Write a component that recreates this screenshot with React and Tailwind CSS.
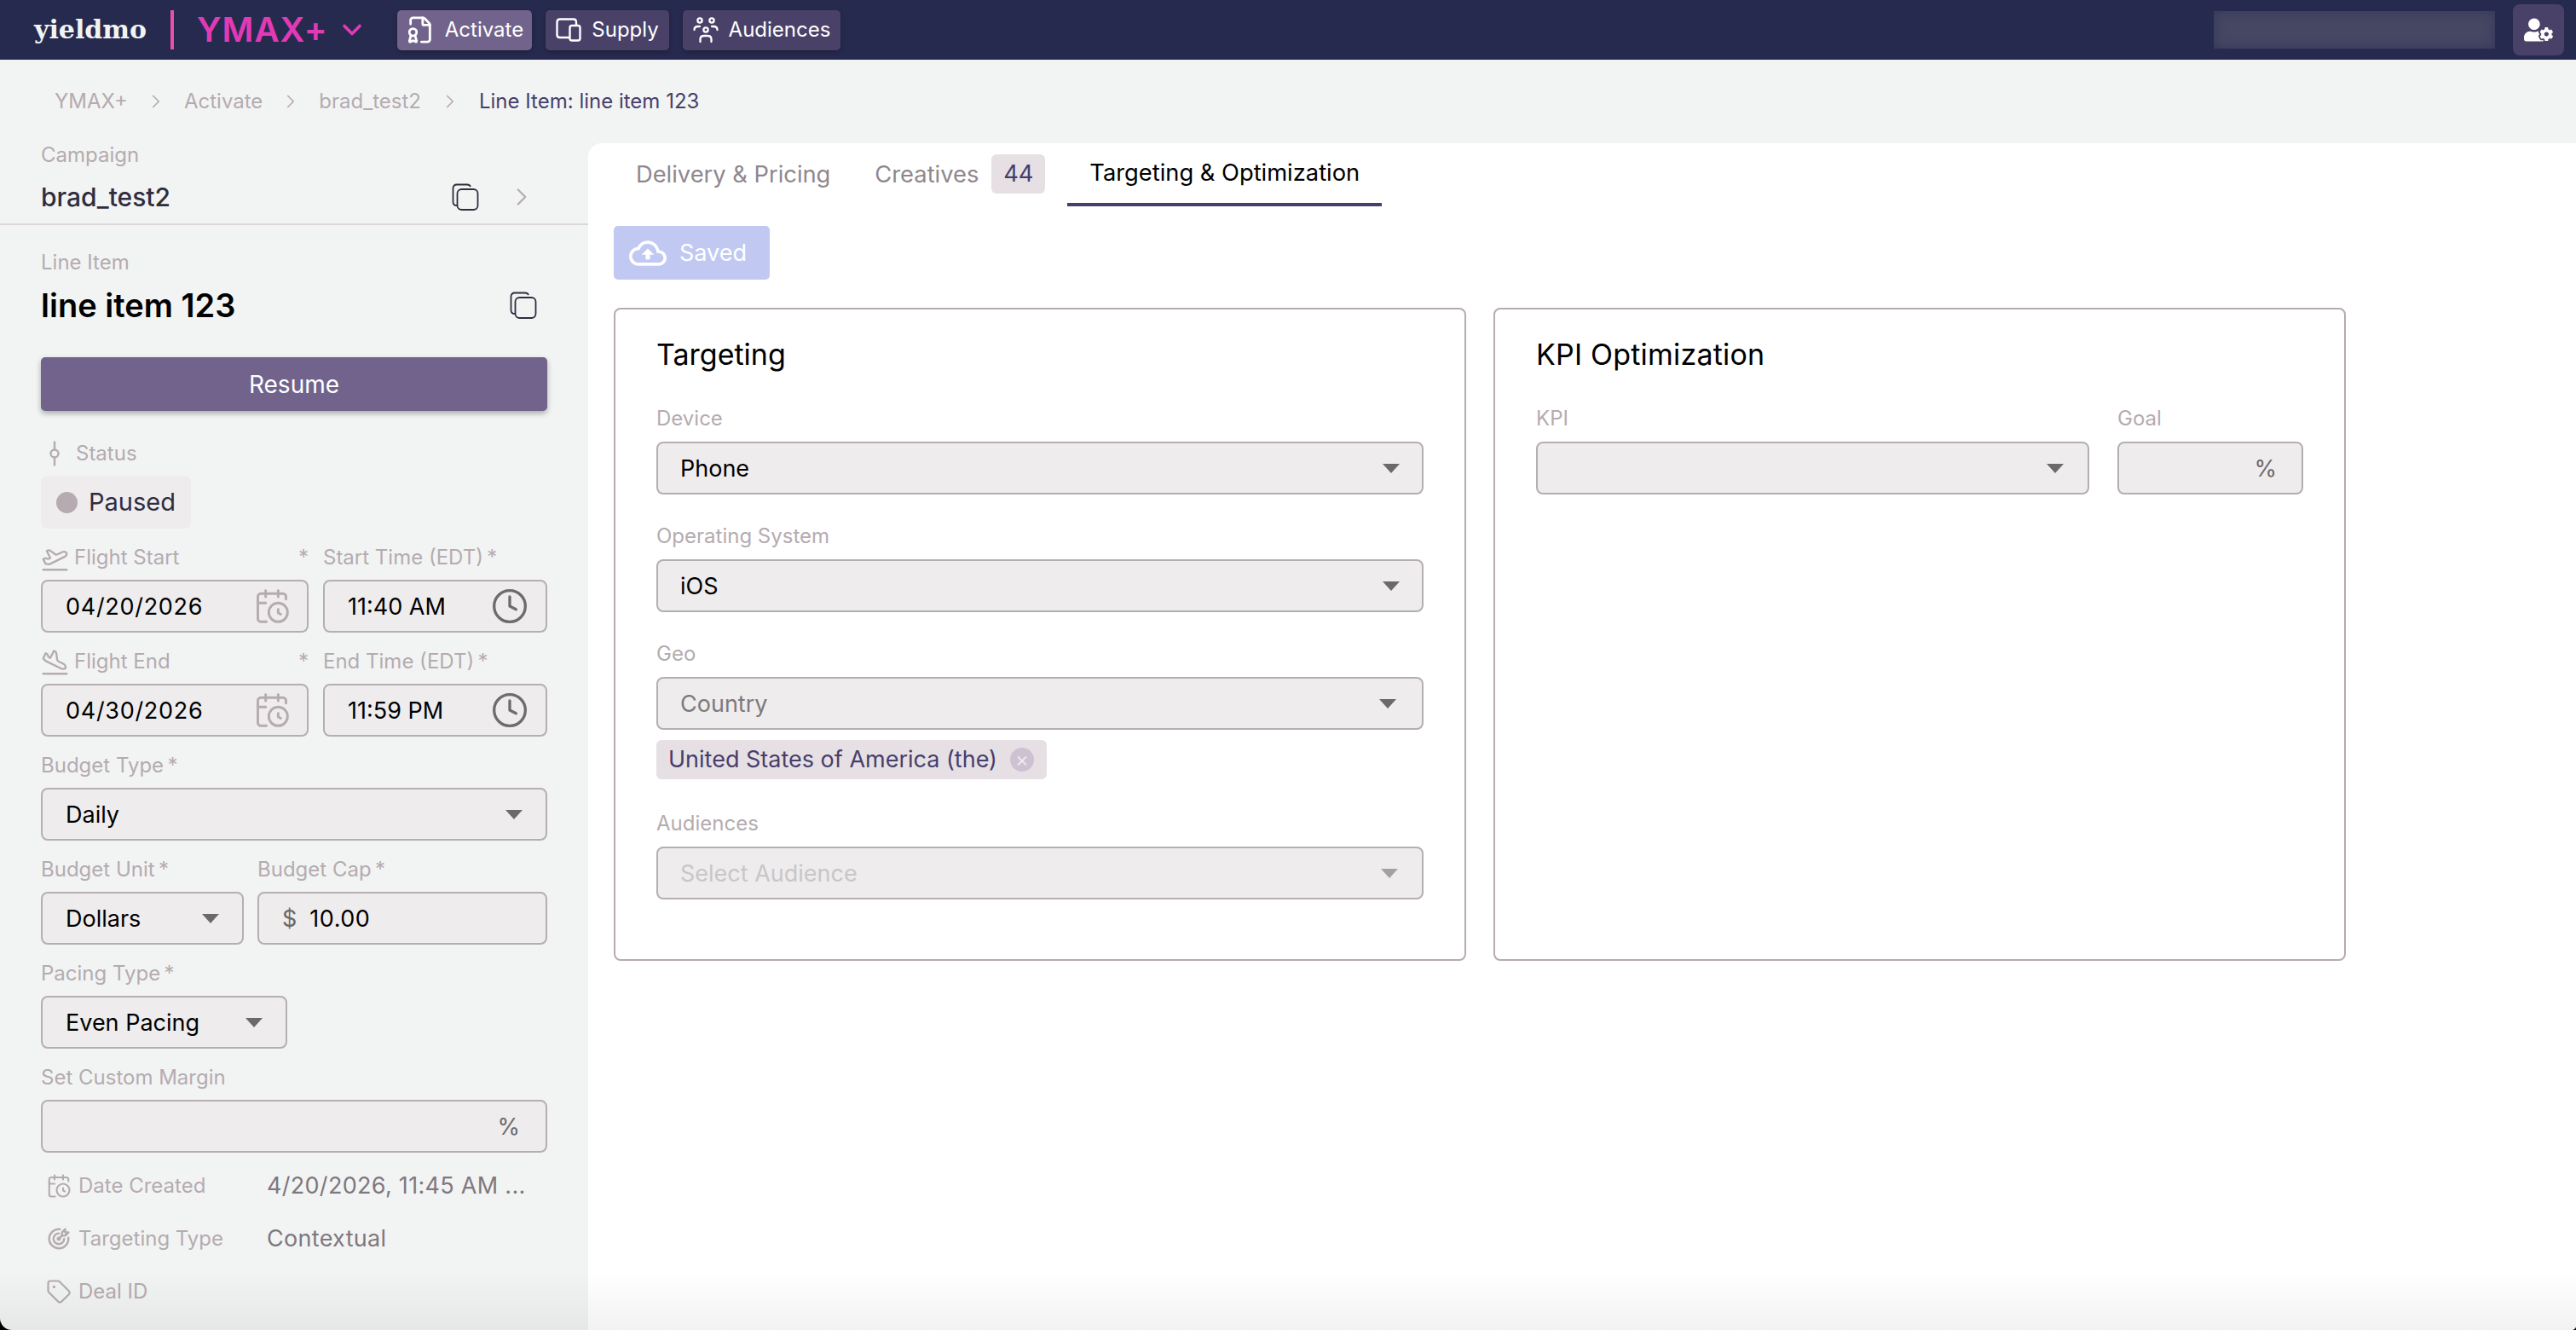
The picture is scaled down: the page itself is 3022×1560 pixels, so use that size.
import React from "react";
import { CalendarClock, Clock, ChevronRight, ChevronDown, PlaneTakeoff, PlaneLanding, GitCommitVertical, Tag, FileBadge } from "lucide-react";
import { FaUserCog } from "react-icons/fa";
import { MdOutlineCloudUpload } from "react-icons/md";
import { TbTargetArrow } from "react-icons/tb";

function CopyIcon({ className }) {
    return (
        <svg viewBox="0 0 32 32" fill="none" stroke="currentColor" strokeWidth="1.8" className={className}>
            <path d="M6 26 Q1.5 26 1.5 22 V6 Q1.5 1.5 6 1.5 H18 Q21 1.5 22 4" />
            <rect x="6.5" y="7" width="24" height="24" rx="5" />
        </svg>
    );
}

function SupplyIcon() {
    return (
        <svg viewBox="0 0 30 28" fill="none" stroke="currentColor" strokeWidth="2.4" strokeLinejoin="round" className="w-[30px] h-[28px]">
            <path d="M17 23 H5 Q1.5 23 1.5 20 V5 Q1.5 1.5 5 1.5 H21 Q24 1.5 24 5 V8" />
            <rect x="16.5" y="9" width="12" height="17.5" rx="2.5" />
        </svg>
    );
}

function AudienceIcon() {
    return (
        <svg viewBox="0 0 30 32" fill="none" stroke="currentColor" strokeWidth="2.3" strokeLinecap="round" className="w-[30px] h-[32px]">
            <circle cx="8" cy="5" r="2.6" />
            <circle cx="22" cy="5" r="2.6" />
            <circle cx="15" cy="16" r="2.6" />
            <path d="M1.5 16 Q1.5 12 6 12 H8" />
            <path d="M22 12 H24 Q28.5 12 28.5 16" />
            <path d="M8.5 30 V27 Q8.5 23 13 23 H17 Q21.5 23 21.5 27 V30" />
        </svg>
    );
}

function Arrow({ className = "text-[#6b696b]" }) {
    return (
        <svg viewBox="0 0 20 11" className={`w-[20px] h-[11px] fill-current shrink-0 ${className}`}>
            <polygon points="0,0 20,0 10,11" />
        </svg>
    );
}

function NavButton({ icon, label, active, width }) {
    return (
        <div className={`h-[47px] rounded-[5px] flex items-center justify-center gap-[12px] text-white text-[24px] shadow-[0_2px_5px_rgba(0,0,0,0.25)] ${width} ${active ? "bg-[#71638b]" : "bg-[#4a4169]"}`}>
            {icon}
            <span>{label}</span>
        </div>
    );
}

function Label({ children, className = "" }) {
    return <div className={`h-[28px] leading-[28px] text-[24px] text-[#b5abb0] whitespace-nowrap ${className}`}>{children}</div>;
}

function Box({ children, className = "", pl = "pl-[27px]" }) {
    return <div className={`h-[62px] rounded-[8px] border-2 border-[#b5afb2] bg-[#eeeced] flex items-center text-[27px] text-black ${pl} ${className}`}>{children}</div>;
}

function Select({ value, className = "", valueClass = "", arrowClass, pr = "pr-[27px]", pl }) {
    return (
        <Box pl={pl} className={`justify-between ${pr} ${className}`}>
            <span className={`mt-[2px] ${valueClass}`}>{value}</span>
            <Arrow className={arrowClass} />
        </Box>
    );
}

function Field({ label, children, className = "" }) {
    return (
        <div className={className}>
            <Label>{label}</Label>
            <div className="mt-[12px]">{children}</div>
        </div>
    );
}

function DateRow({ icon, dateLabel, timeLabel, date, time }) {
    return (
        <div className="flex gap-[17px]">
            <div className="w-[314px]">
                <Label className="flex items-center">
                    <span className="w-[39px] text-[#b5abb0]">{icon}</span>
                    <span className="flex-1">{dateLabel}</span>
                    <span>*</span>
                </Label>
                <Box className="mt-[12px] justify-between pr-[19px]">
                    <span className="mt-[2px] tracking-[0.7px]">{date}</span>
                    <CalendarClock className="w-[44px] h-[44px] text-[#b5abb0]" strokeWidth={1.6} />
                </Box>
            </div>
            <div className="flex-1">
                <Label>{timeLabel}{"\u2009"}*</Label>
                <Box className="mt-[12px] justify-between pr-[20px]">
                    <span className="mt-[2px]">{time}</span>
                    <Clock className="w-[44px] h-[44px] text-[#6e6b6d]" strokeWidth={1.8} />
                </Box>
            </div>
        </div>
    );
}

function MetaRow({ icon, label, value }) {
    return (
        <div className="h-[62px] flex items-center pl-[6px]">
            <span className="w-[38px] text-[#b5abb0] shrink-0">{icon}</span>
            <span className="w-[221px] text-[24px] text-[#b5abb0] shrink-0">{label}</span>
            <span className="text-[27px] tracking-[0.3px] text-[#7f787f] whitespace-nowrap">{value}</span>
        </div>
    );
}

function Sidebar() {
    return (
        <aside className="w-[690px] shrink-0">
            <div className="px-[48px] pb-[11px] border-b-2 border-[#dcd8da]">
                <Label>Campaign</Label>
                <div className="mt-[15px] h-[40px] flex items-center">
                    <span className="text-[30px] font-medium text-[#2f2d3f]">brad_test2</span>
                    <CopyIcon className="w-[32px] h-[32px] ml-auto text-[#2f2d3f]" />
                    <ChevronRight className="w-[34px] h-[34px] ml-[33px] mr-[13px] text-[#b5abb0]" strokeWidth={1.6} />
                </div>
            </div>
            <div className="px-[48px]">
                <Label className="mt-[30px]">Line Item</Label>
                <div className="mt-[12px] h-[48px] flex items-center justify-between">
                    <span className="text-[38px] font-semibold text-black">line item 123</span>
                    <CopyIcon className="w-[32px] h-[32px] mr-[12px] text-[#2f2d3f]" />
                </div>
                <div className="mt-[37px] h-[63px] rounded-[5px] bg-[#71638b] text-white text-[28px] flex items-center justify-center shadow-[0_3px_6px_rgba(0,0,0,0.3)]">Resume</div>
                <Label className="mt-[36px] flex items-center">
                    <GitCommitVertical className="w-[36px] h-[36px] ml-[-2px] mr-[7px]" strokeWidth={1.6} />
                    Status
                </Label>
                <div className="mt-[12px] h-[62px] w-[176px] rounded-[8px] bg-[#eeeced] flex items-center gap-[13px] pl-[18px] text-[29px] text-[#2f2d3f]">
                    <span className="w-[25px] h-[25px] rounded-full bg-[#b5abb0]" />
                    Paused
                </div>
                <div className="mt-[20px] flex flex-col gap-[20px]">
                    <DateRow icon={<PlaneTakeoff className="w-[33px] h-[33px]" strokeWidth={1.7} />} dateLabel="Flight Start" timeLabel="Start Time (EDT)" date="04/20/2026" time="11:40 AM" />
                    <DateRow icon={<PlaneLanding className="w-[33px] h-[33px]" strokeWidth={1.7} />} dateLabel="Flight End" timeLabel="End Time (EDT)" date="04/30/2026" time="11:59 PM" />
                    <Field label={"Budget Type\u2009*"}><Select value="Daily" /></Field>
                    <div className="flex gap-[16px]">
                        <Field label={"Budget Unit\u2009*"} className="w-[238px]"><Select value="Dollars" /></Field>
                        <Field label={"Budget Cap\u2009*"} className="flex-1">
                            <Box className="gap-[15px]"><span className="mt-[2px] text-[#6b696b]">$</span><span className="mt-[2px] tracking-[0.5px]">10.00</span></Box>
                        </Field>
                    </div>
                    <Field label={"Pacing Type\u2009*"} className="w-[289px]"><Select value="Even Pacing" /></Field>
                    <Field label="Set Custom Margin">
                        <Box className="justify-end pr-[30px]"><span className="mt-[2px] text-[#6b696b]">%</span></Box>
                    </Field>
                </div>
                <div className="mt-[8px]">
                    <MetaRow icon={<CalendarClock className="w-[30px] h-[30px]" strokeWidth={1.7} />} label="Date Created" value="4/20/2026, 11:45 AM ..." />
                    <MetaRow icon={<TbTargetArrow className="w-[30px] h-[30px]" />} label="Targeting Type" value="Contextual" />
                    <MetaRow icon={<Tag className="w-[30px] h-[30px]" strokeWidth={1.7} />} label="Deal ID" value="" />
                </div>
            </div>
        </aside>
    );
}

function CardField({ label, children, className = "" }) {
    return (
        <div className={className}>
            <Label>{label}</Label>
            <div className="mt-[13px]">{children}</div>
        </div>
    );
}

function Main() {
    return (
        <main className="flex-1 bg-white rounded-tl-[16px] pl-[30px]">
            <div className="h-[74px] flex items-start text-[27.3px]">
                <div className="h-[74px] flex items-center pl-[26px] text-[#8f878d]">Delivery &amp; Pricing</div>
                <div className="h-[74px] flex items-center ml-[52px] text-[#8f878d]">
                    Creatives
                    <span className="ml-[15px] w-[63px] h-[46px] mb-[2px] rounded-[6px] bg-[#e6e0e4] text-[#473e6c] flex items-center justify-center">44</span>
                </div>
                <div className="h-[74px] ml-[26px] px-[26px] flex items-center border-b-4 border-[#473e6c] text-black">Targeting &amp; Optimization</div>
            </div>
            <div className="mt-[23px] w-[183px] h-[63px] rounded-[5px] bg-[#c1c9f3] text-white text-[27px] flex items-center gap-[15px] pl-[18px]">
                <MdOutlineCloudUpload className="w-[44px] h-[44px]" />
                <span className="mt-[2px]">Saved</span>
            </div>
            <div className="mt-[33px] flex gap-[32px]">
                <section className="w-[1000px] h-[766px] rounded-[8px] border-2 border-[#b5abb0] px-[48px] pt-[33px]">
                    <h2 className="h-[40px] leading-[40px] text-[34px] text-black">Targeting</h2>
                    <CardField label="Device" className="mt-[41px]"><Select value="Phone" pl="pl-[26px]" pr="pr-[26px]" /></CardField>
                    <CardField label="Operating System" className="mt-[35px]"><Select value="iOS" pl="pl-[26px]" pr="pr-[26px]" /></CardField>
                    <CardField label="Geo" className="mt-[35px]"><Select value="Country" pl="pl-[26px]" valueClass="text-[#7c7a7c]" pr="pr-[30px]" /></CardField>
                    <div className="mt-[12px] w-[458px] h-[46px] rounded-[6px] bg-[#e6e0e4] flex items-center pl-[14px] text-[27px] text-[#473e6c] whitespace-nowrap">
                        United States of America (the)
                        <span className="ml-[15px] w-[28px] h-[28px] rounded-full bg-[#cdc2d2] text-[#eee9ee] flex items-center justify-center text-[24px] leading-none">×</span>
                    </div>
                    <CardField label="Audiences" className="mt-[38px]"><Select value="Select Audience" pl="pl-[26px]" valueClass="text-[#c9c6c8]" arrowClass="text-[#a3a1a3]" pr="pr-[28px]" /></CardField>
                </section>
                <section className="w-[1000px] h-[766px] rounded-[8px] border-2 border-[#b5abb0] px-[48px] pt-[33px]">
                    <h2 className="h-[40px] leading-[40px] text-[34px] tracking-[0.2px] text-black">KPI Optimization</h2>
                    <div className="mt-[41px] flex gap-[33px]">
                        <CardField label="KPI" className="flex-1"><Select value="" pr="pr-[28px]" /></CardField>
                        <CardField label="Goal" className="w-[218px]">
                            <Box className="justify-end pr-[29px]"><span className="mt-[2px] text-[#6b696b]">%</span></Box>
                        </CardField>
                    </div>
                </section>
            </div>
        </main>
    );
}

export default function App() {
    return (
        <div className="w-[3022px] h-[1560px] bg-black">
            <div className="relative w-full h-full overflow-hidden rounded-bl-[14px] rounded-br-[5px] bg-[#f2f4f3] font-['Inter',sans-serif]">
                <header className="h-[70px] bg-[#272a4f] flex items-center pl-[40px] pr-[14px]">
                    <span className="w-[133px] font-['DejaVu_Serif',serif] font-bold text-[30px] leading-none text-[#f2f4f3] whitespace-nowrap">yieldmo</span>
                    <span className="ml-[27px] w-[4px] h-[46px] bg-[#ec4fa9]" />
                    <span className="ml-[27px] w-[150px] text-[40px] font-semibold leading-none text-[#e23ab5] tracking-[1px] whitespace-nowrap">YMAX+</span>
                    <ChevronDown className="ml-[14px] w-[36px] h-[36px] text-[#e23ab5]" strokeWidth={2.4} />
                    <div className="ml-[35px] flex gap-[16px]">
                        <NavButton active width="w-[158px]" label="Activate" icon={<FileBadge className="w-[34px] h-[34px]" strokeWidth={2} />} />
                        <NavButton width="w-[145px]" label="Supply" icon={<SupplyIcon />} />
                        <NavButton width="w-[185px]" label="Audiences" icon={<AudienceIcon />} />
                    </div>
                    <div className="ml-auto w-[330px] h-[44px] bg-[#454763] shadow-[inset_0_0_14px_#34365a]" />
                    <div className="ml-[21px] w-[60px] h-[60px] rounded-[8px] bg-[#4a4169] flex items-center justify-center text-white">
                        <FaUserCog className="w-[34px] h-[34px]" />
                    </div>
                </header>
                <nav className="h-[98px] flex items-center pl-[64px] text-[24px] text-[#b5abb0]">
                    <span>YMAX+</span>
                    <ChevronRight className="w-[26px] h-[26px] mx-[20px]" strokeWidth={1.6} />
                    <span>Activate</span>
                    <ChevronRight className="w-[26px] h-[26px] mx-[20px]" strokeWidth={1.6} />
                    <span>brad_test2</span>
                    <ChevronRight className="w-[26px] h-[26px] mx-[21px]" strokeWidth={1.6} />
                    <span className="text-[#473e6c]">Line Item: line item 123</span>
                </nav>
                <div className="flex h-[1392px]">
                    <Sidebar />
                    <Main />
                </div>
                <div className="absolute left-0 right-0 bottom-0 h-[70px] pointer-events-none bg-gradient-to-b from-transparent to-[rgba(0,0,0,0.05)]" />
            </div>
        </div>
    );
}
